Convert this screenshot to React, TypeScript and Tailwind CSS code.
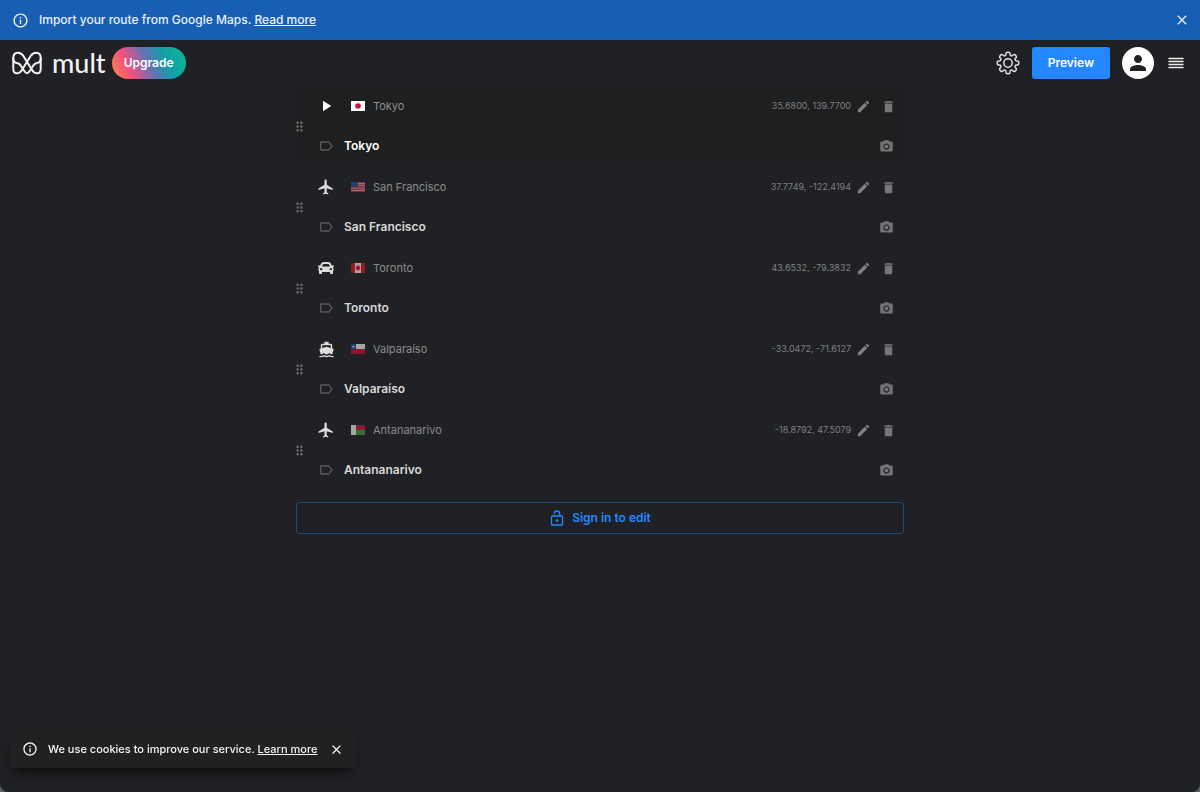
import React, { useState } from 'react';
import {
    MdClose,
    MdDelete,
    MdDirectionsBoatFilled,
    MdDragIndicator,
    MdEdit,
    MdFlight,
    MdInfoOutline,
    MdLabelOutline,
    MdPerson,
    MdPhotoCamera,
    MdPlayArrow,
} from 'react-icons/md';
import { FaCar } from 'react-icons/fa';

type Country = 'jp' | 'us' | 'ca' | 'cl' | 'mg';
type Mode = 'start' | 'plane' | 'car' | 'boat';

interface Stop {
    name: string;
    country: Country;
    mode: Mode;
    coords: string;
}

const STOPS: Stop[] = [
    { name: 'Tokyo', country: 'jp', mode: 'start', coords: '35.6800, 139.7700' },
    { name: 'San Francisco', country: 'us', mode: 'plane', coords: '37.7749, -122.4194' },
    { name: 'Toronto', country: 'ca', mode: 'car', coords: '43.6532, -79.3832' },
    { name: 'Valparaíso', country: 'cl', mode: 'boat', coords: '-33.0472, -71.6127' },
    { name: 'Antananarivo', country: 'mg', mode: 'plane', coords: '-18.8792, 47.5079' },
];

const MODE_ICONS = {
    start: <MdPlayArrow size={18} />,
    plane: <MdFlight size={18} />,
    car: <FaCar size={16} />,
    boat: <MdDirectionsBoatFilled size={17} />,
};

const FLAGS: Record<Country, React.ReactNode> = {
    jp: (
        <>
            <rect width="14" height="10" fill="#fff" />
            <circle cx="7" cy="5" r="2.8" fill="#d0103a" />
        </>
    ),
    us: (
        <>
            <rect width="14" height="10" fill="#e8c9cd" />
            <path d="M0 .6h14M0 2.8h14M0 5h14M0 7.2h14M0 9.4h14" stroke="#c8303f" strokeWidth="1.3" />
            <rect width="7" height="5" fill="#2f4f9f" />
        </>
    ),
    ca: (
        <>
            <rect width="14" height="10" fill="#e3151c" />
            <rect x="4" width="6" height="10" fill="#fff" />
            <path d="M7 1.6l.7 1.3 1-.3-.2 1.5 1.2.2-.9 1.5.3.9-1.7.1V8.3h-.8V6.8l-1.7-.1.3-.9-.9-1.5 1.2-.2-.2-1.5 1 .3z" fill="#e3151c" />
        </>
    ),
    cl: (
        <>
            <rect width="14" height="10" fill="#fff" />
            <rect y="5" width="14" height="5" fill="#d01236" />
            <rect width="5" height="5" fill="#1450a8" />
            <path d="M2.5 1l.4 1.1H4l-.9.7.3 1.1-.9-.6-.9.6.3-1.1-.9-.7h1.1z" fill="#fff" />
        </>
    ),
    mg: (
        <>
            <rect width="14" height="10" fill="#fff" />
            <rect x="5" width="9" height="5" fill="#d8123a" />
            <rect x="5" y="5" width="9" height="5" fill="#4fa03a" />
        </>
    ),
};

const Flag: React.FC<{ country: Country }> = ({ country }) => (
    <svg viewBox="0 0 14 10" className="h-[10px] w-[14px] shrink-0" aria-hidden="true">
        {FLAGS[country]}
    </svg>
);

const LogoMark = () => (
    <svg viewBox="0 0 30 24" className="h-6 w-[30px]" fill="none" stroke="currentColor" strokeWidth="2" strokeLinecap="round" strokeLinejoin="round" aria-hidden="true">
        <path d="M1.300 17V7C1.300 3.500 3.200 1.700 6 1.700C8.600 1.700 10 2.900 11.300 4.900L19.600 18.200C21 20.600 22.200 22.300 25 22.300C27.300 22.300 28.700 20.600 28.700 18V7C28.700 3.500 26.800 1.700 24 1.700C21.400 1.700 20 2.900 18.700 4.900L10.400 18.200C9 20.600 7.800 22.300 5 22.300C2.700 22.300 1.300 20.600 1.300 18" />
        <path d="M1.300 7.500C1.300 10.200 2.800 11.700 5 12C7.400 12.400 8.600 14 9.700 15.900L11.900 19.500C13.100 21.500 13.700 22.300 15 22.300C16.300 22.300 16.900 21.500 18.100 19.500L20.300 15.900C21.400 14 22.600 12.400 25 12C27.200 11.700 28.700 10.200 28.700 7.500" />
    </svg>
);

// Eight rounded teeth: corner points become the controls of quadratic curves
const gearPath = () => {
    const points: number[][] = [];
    for (let tooth = 0; tooth < 8; tooth++) {
        [[-11, 11], [11, 11], [14, 7.8], [31, 7.8]].forEach(([deg, r]) => {
            const a = ((tooth * 45 + deg) * Math.PI) / 180;
            points.push([12 + r * Math.cos(a), 12 + r * Math.sin(a)]);
        });
    }
    const mid = (i: number) => {
        const a = points[i % points.length];
        const b = points[(i + 1) % points.length];
        return `${((a[0] + b[0]) / 2).toFixed(2)} ${((a[1] + b[1]) / 2).toFixed(2)}`;
    };
    return `M${mid(points.length - 1)}` + points.map((p, i) => `Q${p[0].toFixed(2)} ${p[1].toFixed(2)} ${mid(i)}`).join('') + 'Z';
};

const GearIcon = () => (
    <svg viewBox="0 0 24 24" className="size-6" fill="none" stroke="currentColor" strokeWidth="1.5" aria-hidden="true">
        <path d={gearPath()} />
        <circle cx="12" cy="12" r="4.200" />
    </svg>
);

const MenuIcon = () => (
    <svg viewBox="0 0 16 16" className="size-4" stroke="currentColor" strokeWidth="1.6" aria-hidden="true">
        <path d="M.5 3.500h15M.5 6.500h15M.5 9.500h15M.5 12.500h15" />
    </svg>
);

const UnlockIcon = () => (
    <svg viewBox="0 0 16 16" className="size-4" fill="none" stroke="currentColor" strokeWidth="1.3" aria-hidden="true">
        <rect x="2.500" y="6" width="11" height="9" rx="1" />
        <path d="M5.300 4V3.700a2.700 2.700 0 0 1 5.400 0V6" />
        <circle cx="8" cy="10.500" r="1.300" fill="currentColor" stroke="none" />
    </svg>
);

const StopRow: React.FC<{ stop: Stop; active: boolean }> = ({ stop, active }) => {
    const [title, setTitle] = useState(stop.name);

    return (
        <li className={`flex items-center rounded ${active ? 'bg-[#1e1f20]' : ''}`}>
            <button aria-label={`Move ${stop.name}`} className="flex w-[18px] shrink-0 justify-center text-[#6a6b6d]">
                <MdDragIndicator size={15} />
            </button>
            <div className="min-w-0 flex-1 pr-3.5 pl-2">
                <div className="flex h-10 items-center">
                    <button aria-label={`Transport to ${stop.name}`} className={`flex w-5 shrink-0 justify-center ${active ? 'text-white' : 'text-[#dcdcdc]'}`}>
                        {MODE_ICONS[stop.mode]}
                    </button>
                    <div className={`flex min-w-0 flex-1 items-center gap-2 pl-[15px] ${active ? '' : 'opacity-60'}`}>
                        <Flag country={stop.country} />
                        <span className={`truncate text-[11px] ${active ? 'text-[#8f9091]' : 'text-[#d0d0d0]'}`}>{stop.name}</span>
                    </div>
                    <span className="text-[9px] text-[#7f8081]">{stop.coords}</span>
                    <button aria-label={`Edit ${stop.name}`} className="ml-[5px] text-[#808182]">
                        <MdEdit size={15} />
                    </button>
                    <button aria-label={`Delete ${stop.name}`} className="ml-2.5 text-[#757677]">
                        <MdDelete size={15} />
                    </button>
                </div>
                <div className="flex h-10 items-center pr-0.5">
                    <MdLabelOutline size={16} className="mx-0.5 shrink-0 text-[#58595b]" aria-hidden="true" />
                    <input
                        aria-label={`Title for ${stop.name}`}
                        value={title}
                        onChange={(e) => setTitle(e.target.value)}
                        className={`ml-2 min-w-0 flex-1 bg-transparent text-xs font-semibold outline-none ${active ? 'text-white' : 'text-[#d8d8d8]'}`}
                    />
                    <button aria-label={`Add photo to ${stop.name}`} className="text-[#737475]">
                        <MdPhotoCamera size={15} />
                    </button>
                </div>
            </div>
        </li>
    );
};

const App: React.FC = () => {
    const [showBanner, setShowBanner] = useState(true);
    const [showCookies, setShowCookies] = useState(true);

    return (
        <div className="min-h-screen bg-[#5c6264] font-['Inter',sans-serif]">
            <div className="flex min-h-screen flex-col rounded-b-lg bg-[#202124] text-white">
                {showBanner && (
                    <div className="flex h-10 items-center bg-[#185fb4] pr-2.5 pl-3 text-xs font-medium text-[#eaf1fa]">
                        <MdInfoOutline size={17} aria-hidden="true" />
                        <p className="ml-2.5 flex-1">
                            Import your route from Google Maps. <a href="#import" className="underline">Read more</a>
                        </p>
                        <button aria-label="Close banner" onClick={() => setShowBanner(false)}>
                            <MdClose size={16} />
                        </button>
                    </div>
                )}
                <header className="flex h-[46px] items-center px-3">
                    <a href="#home" aria-label="mult" className="flex items-center gap-2.5 text-[#f2f2f2]">
                        <LogoMark />
                        <span className="font-['Lato',sans-serif] text-[27px] leading-8 font-medium">mult</span>
                    </a>
                    <button className="ml-1.5 h-8 rounded-full bg-linear-[65deg,#ff8a45_0%,#f0507f_25%,#5577b8_52%,#0fa3a5_72%,#0cb892_100%] px-3 text-xs font-semibold">
                        Upgrade
                    </button>
                    <div className="ml-auto flex items-center pr-1">
                        <button aria-label="Settings" className="text-[#dedede]">
                            <GearIcon />
                        </button>
                        <button className="ml-3 h-8 rounded-[3px] bg-[#2388ff] px-4 text-xs font-semibold">Preview</button>
                        <button aria-label="Account" className="ml-3 flex size-8 items-center justify-center rounded-full bg-white text-[#202124]">
                            <MdPerson size={24} />
                        </button>
                        <button aria-label="Menu" className="ml-3.5 text-[#eeeeee]">
                            <MenuIcon />
                        </button>
                    </div>
                </header>
                <main className="mx-auto w-full max-w-[620px]">
                    <ul className="flex flex-col gap-px">
                        {STOPS.map((stop, i) => (
                            <StopRow key={stop.name} stop={stop} active={i === 0} />
                        ))}
                    </ul>
                    <div className="px-1.5 pt-3">
                        <button className="flex h-8 w-full items-center justify-center gap-[7px] rounded-[3px] border border-[#1f4a85] text-xs font-semibold text-[#2388ff]">
                            <UnlockIcon />
                            Sign in to edit
                        </button>
                    </div>
                </main>
            </div>
            {showCookies && (
                <div className="fixed bottom-6 left-2.5 flex h-[38px] items-center rounded bg-[#212121] px-3 text-[11px] font-medium text-[#f5f5f5] shadow-lg shadow-black/40">
                    <MdInfoOutline size={16} aria-hidden="true" />
                    <p className="ml-2.5">
                        We use cookies to improve our service. <a href="#cookies" className="underline">Learn more</a>
                    </p>
                    <button aria-label="Close cookie notice" onClick={() => setShowCookies(false)} className="ml-3">
                        <MdClose size={15} />
                    </button>
                </div>
            )}
        </div>
    );
};

export default App;
